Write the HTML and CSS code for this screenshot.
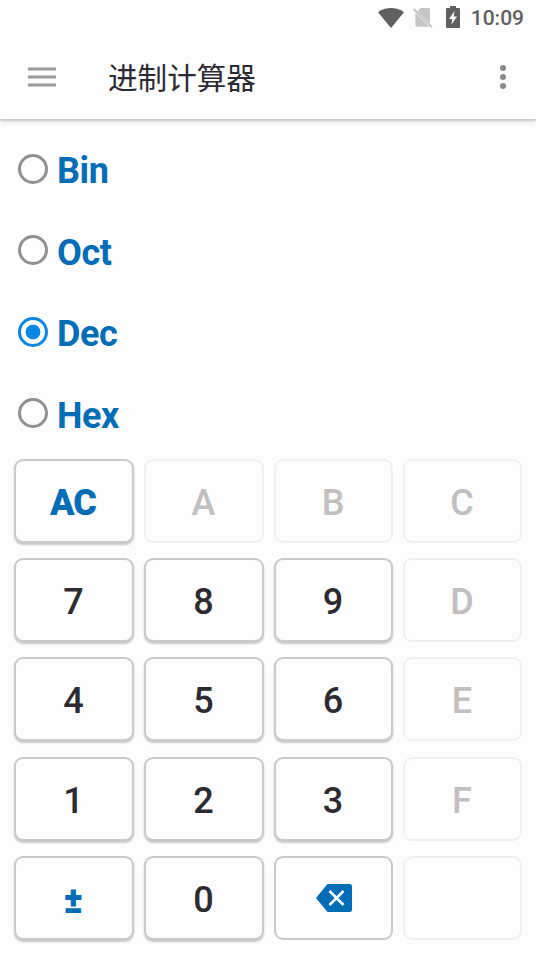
FILE: index.html
```html
<!DOCTYPE html>
<html lang="zh-CN">
<head>
<meta charset="utf-8">
<title>进制计算器</title>
<link rel="stylesheet" href="styles.css">
</head>
<body>
<header class="header">
  <div class="status">
    <svg class="wifi" width="26" height="20" viewBox="0 0 26 20"><path d="M0 4.2C7.5-1.4 18.5-1.4 26 4.2L13 20Z" fill="#606060"/></svg>
    <svg class="sim" width="20" height="20" viewBox="0 0 20 20"><path d="M7.400 0H15.500Q17 0 17 1.500V15.500L4.400 3.200ZM2.400 4.500L16.300 18.800H3.900Q2.400 18.800 2.400 17.300Z" fill="#c6c6c6"/><path d="M.7.9L18.800 19.200" stroke="#bcbcbc" stroke-width="1.500"/></svg>
    <svg class="battery" width="14" height="22" viewBox="0 0 14 22"><path d="M4 0H10V2H13Q14 2 14 3V21Q14 22 13 22H1Q0 22 0 21V3Q0 2 1 2H4Z" fill="#606060"/><path d="M8.500 5L3 13H6.200L5.500 18.500L11 10.500H7.700Z" fill="#fdfdfd"/></svg>
    <span class="clock">10:09</span>
  </div>
  <div class="toolbar">
    <svg class="menu" width="28" height="20" viewBox="0 0 28 20"><path d="M0 2H28M0 10H28M0 18H28" stroke="#9b9b9b" stroke-width="3"/></svg>
    <h1 class="title">进制计算器</h1>
    <svg class="more" width="6" height="24" viewBox="0 0 6 24"><g fill="#8a8a8a"><circle cx="3" cy="3" r="3"/><circle cx="3" cy="12" r="3"/><circle cx="3" cy="21" r="3"/></g></svg>
  </div>
</header>
<main>
  <div class="bases">
    <div class="base"><span class="radio"></span><span class="name">Bin</span></div>
    <div class="base"><span class="radio"></span><span class="name">Oct</span></div>
    <div class="base"><span class="radio selected"></span><span class="name">Dec</span></div>
    <div class="base"><span class="radio"></span><span class="name">Hex</span></div>
  </div>
  <div class="keypad">
    <div class="key action">AC</div><div class="key disabled">A</div><div class="key disabled">B</div><div class="key disabled">C</div>
    <div class="key">7</div><div class="key">8</div><div class="key">9</div><div class="key disabled">D</div>
    <div class="key">4</div><div class="key">5</div><div class="key">6</div><div class="key disabled">E</div>
    <div class="key">1</div><div class="key">2</div><div class="key">3</div><div class="key disabled">F</div>
    <div class="key action sign">±</div><div class="key">0</div>
    <div class="key flat"><svg width="36" height="28" viewBox="0 0 36 28"><path d="M11.500 0H33.500Q36 0 36 2.500V25.500Q36 28 33.500 28H11.500L0 14Z" fill="#006db6"/><path d="M13.500 7L27.500 21M27.500 7L13.500 21" stroke="#fff" stroke-width="2.500"/></svg></div>
    <div class="key disabled"></div>
  </div>
</main>
</body>
</html>
```
FILE: styles.css
```css
* { box-sizing: border-box; }

body {
  margin: 0;
  height: 954px;
  overflow: hidden;
  background: #fdfdfd;
  font-family: Roboto, "Noto Sans CJK SC", sans-serif;
}

.header {
  height: 119px;
  box-shadow: 0 2px 2px #cbcbcb, 0 4px 4px #ececec;
}

.status {
  display: flex;
  justify-content: flex-end;
  align-items: center;
  height: 35px;
  padding-right: 12px;
}

.sim { margin-left: 9px; }
.battery { margin: 0 11px 1px 13px; }

.clock {
  padding-top: 1px;
  color: #606060;
  font-size: 21px;
  font-weight: 500;
  line-height: 34px;
}

.toolbar {
  display: flex;
  align-items: center;
  height: 84px;
  padding: 0 30px 0 28px;
}

.title {
  margin: 3px 0 0 52px;
  color: #2b2b31;
  font-size: 29.6px;
  font-weight: 400;
  line-height: 44px;
}

.more { margin-left: auto; }

.bases { padding: 10px 0 0 18px; }

.base {
  display: flex;
  align-items: center;
  height: 81.5px;
  color: #006db6;
  font-size: 36px;
  font-weight: 700;
  letter-spacing: -0.4px;
}

.name { padding-top: 3px; }

.radio {
  width: 30px;
  height: 30px;
  margin: 0 9px 2px 0;
  border: 3px solid #919191;
  border-radius: 50%;
}

.selected {
  border-color: #0a87e5;
  background: radial-gradient(circle, #0a87e5 7px, transparent 7.7px);
}

.keypad {
  display: grid;
  grid-template-columns: 120px 120px 119px 119px;
  grid-auto-rows: 84px;
  gap: 15.2px 10px;
  padding: 4px 14px 0;
}

.key {
  display: flex;
  align-items: center;
  justify-content: center;
  padding: 4px 1px 0 0;
  border: 2px solid #cacaca;
  border-radius: 9px;
  background: #fdfdfd;
  box-shadow: 0 2px 2px #c8c8c8;
  color: #2b2b31;
  font-size: 36px;
  font-weight: 500;
}

.action {
  padding-right: 2px;
  color: #006db6;
  font-weight: 900;
  letter-spacing: -1px;
}

.sign { padding-top: 6px; }

.disabled {
  border-color: #f0f0f0;
  box-shadow: none;
  color: #c0c0c0;
}

.flat {
  padding: 1px 0 0;
  box-shadow: none;
}
```
